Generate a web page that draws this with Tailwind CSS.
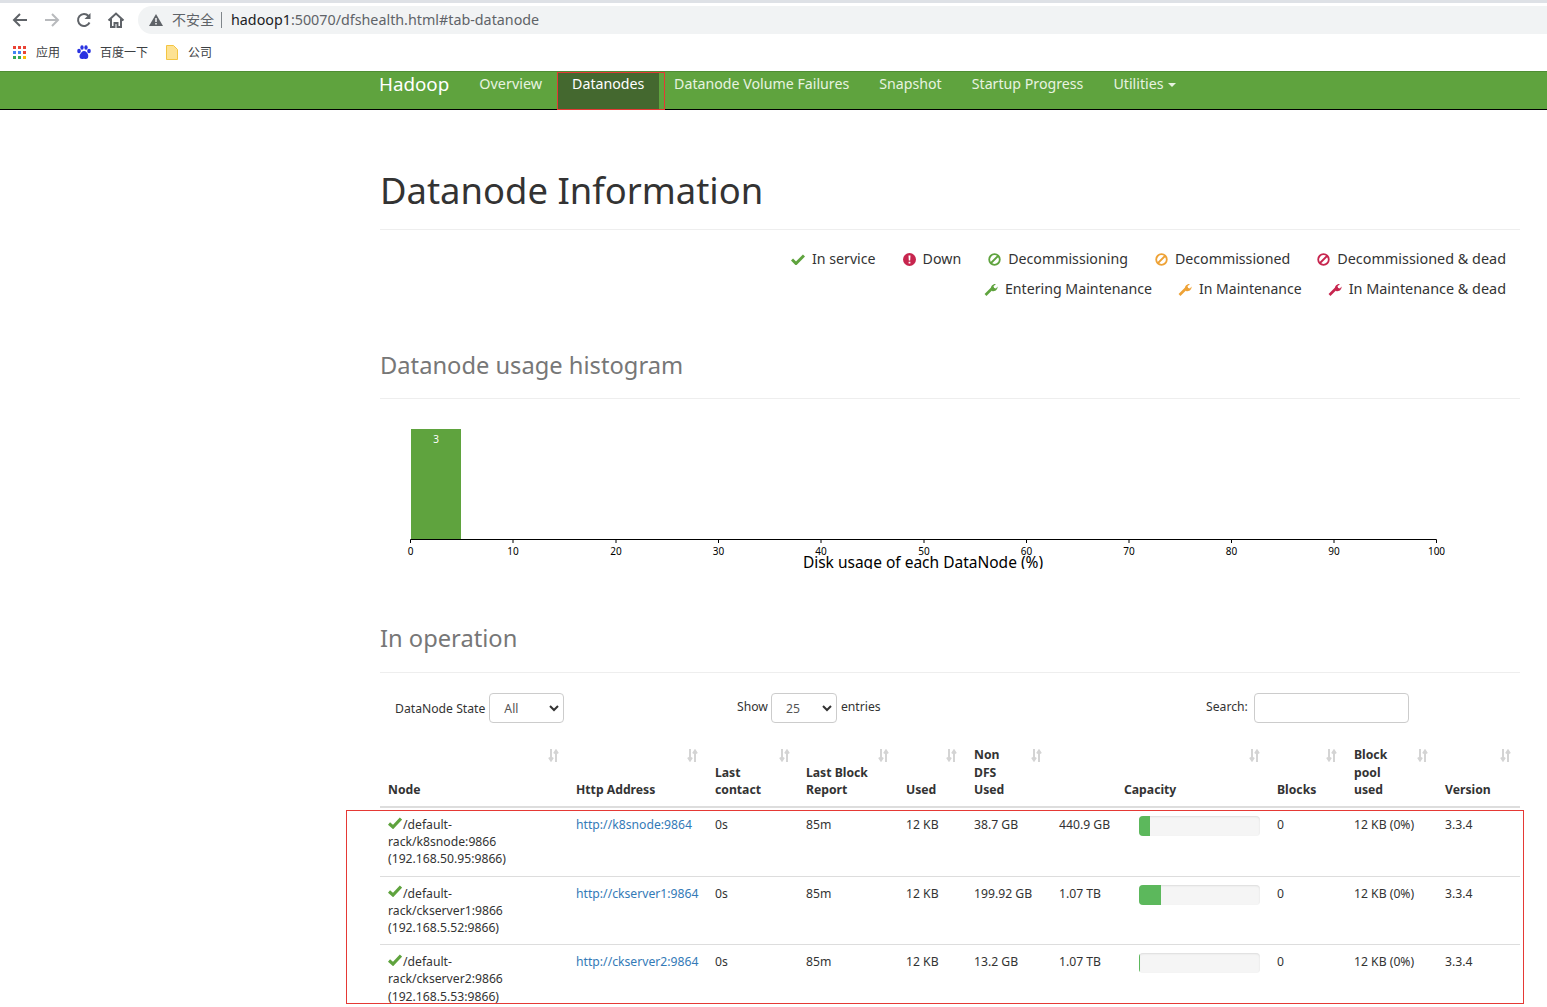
<!DOCTYPE html>
<html lang="en">
<head>
<meta charset="UTF-8" />
<title>Namenode information</title>
<script src="https://cdn.jsdelivr.net/npm/@tailwindcss/browser@4"></script>
</head>
<body class="bg-white text-[#333] font-['Noto_Sans','Noto_Sans_CJK_SC',sans-serif] text-[12.2px] leading-[17px] h-[1007px] overflow-hidden">

<!-- Browser chrome -->
<div class="h-[71px] bg-white border-t-[3px] border-[#dee1e6]">
  <div class="h-[32px] flex items-center pt-[1px]">
    <svg class="ml-[11px]" width="18" height="18" viewBox="0 0 18 18" fill="none" stroke="#5f6368" stroke-width="2"><path d="M16 9H3M9 3 3 9l6 6"/></svg>
    <svg class="ml-[14px]" width="18" height="18" viewBox="0 0 18 18" fill="none" stroke="#b8babd" stroke-width="2"><path d="M2 9h13M9 3l6 6-6 6"/></svg>
    <svg class="ml-[14px]" width="18" height="18" viewBox="0 0 18 18" fill="none" stroke="#5f6368" stroke-width="2"><path d="M14.500 11.500A6 6 0 1 1 13.500 5"/><path d="M15.500 2v6h-6" fill="#5f6368" stroke="none"/></svg>
    <svg class="ml-[14px]" width="18" height="18" viewBox="0 0 18 18" fill="none" stroke="#5f6368" stroke-width="2"><path d="M1.500 9.500 9 2.500l7.500 7M4 8v8h3.500v-4h3v4H14V8"/></svg>
    <div class="ml-[13px] flex-1 h-[28px] bg-[#f1f3f4] rounded-l-[14px] flex items-center pl-[11px] text-[14.3px]">
      <svg width="14" height="14" viewBox="0 0 14 14"><path d="M7 1 14 13H0Z" fill="#5f6368"/><path d="M6.300 5h1.400v4H6.300zM6.300 10h1.400v1.500H6.300z" fill="#fff"/></svg>
      <span class="ml-[9px] text-[#5f6368] text-[14px]">不安全</span>
      <span class="ml-[7px] w-px h-[16px] bg-[#80868b]"></span>
      <span class="ml-[9px] text-[#202124]">hadoop1<span class="text-[#5f6368]">:50070/dfshealth.html#tab-datanode</span></span>
    </div>
  </div>
  <div class="h-[35px] flex items-center text-[12px] text-[#3c4043]">
    <svg class="ml-[13px]" width="14" height="14" viewBox="0 0 14 14"><path fill="#ea4335" d="M0 0h3v3H0zM5 0h3v3H5zM10 0h3v3h-3z"/><path fill="#4285f4" d="M0 5h3v3H0zM5 5h3v3H5z"/><path fill="#ea4335" d="M10 5h3v3h-3z"/><path fill="#34a853" d="M0 10h3v3H0zM5 10h3v3H5z"/><path fill="#fbbc04" d="M10 10h3v3h-3z"/></svg>
    <span class="ml-[9px]">应用</span>
    <svg class="ml-[17px]" width="14" height="15" viewBox="0 0 14 15" fill="#2932e1"><ellipse cx="2" cy="6" rx="1.800" ry="2.300"/><ellipse cx="5" cy="2.500" rx="1.700" ry="2.300"/><ellipse cx="9" cy="2.500" rx="1.700" ry="2.300"/><ellipse cx="12" cy="6" rx="1.800" ry="2.300"/><path d="M7 6c-2 0-3 2-4 3.500S2.500 14 5 14c1 0 1.500-.3 2-.3s1 .3 2 .3c2.500 0 2.500-3 2-4.500S9 6 7 6Z"/></svg>
    <span class="ml-[9px]">百度一下</span>
    <svg class="ml-[18px]" width="12" height="15" viewBox="0 0 12 15"><path d="M.5.500h7l4 4v10H.500Z" fill="#fde293" stroke="#f4c542"/></svg>
    <span class="ml-[10px]">公司</span>
  </div>
</div>

<!-- Navbar -->
<nav class="h-[39px] bg-[#5fa33e] border-t border-[#4f8d33] border-b border-b-black flex text-[14.2px] leading-[20px] text-[#e8f3e0] pl-[364px]">
  <a class="px-[15px] text-[18.8px] leading-[24px] text-white">Hadoop</a>
  <a class="px-[15px] pt-[2px] text-[14.4px]">Overview</a>
  <a class="w-[108px] h-[38px] border border-[#e53935]">
    <span class="block w-[101px] h-full bg-[#44682f] text-white pl-[14px] pt-[1px]">Datanodes</span>
  </a>
  <a class="pl-[9px] pr-[15px] pt-[2px]">Datanode Volume Failures</a>
  <a class="px-[15px] pt-[2px]">Snapshot</a>
  <a class="px-[15px] pt-[2px]">Startup Progress</a>
  <a class="px-[15px] pt-[2px] flex items-start gap-[5px]">Utilities <span class="mt-[9px] border-x-[4px] border-x-transparent border-t-[4px] border-t-[#e8f3e0]"></span></a>
</nav>

<main class="ml-[380px] w-[1140px]">
  <div class="mt-[56px] h-[64px] border-b border-[#eee]">
    <h1 class="text-[36.4px] leading-[48px] text-[#333]">Datanode Information</h1>
  </div>

  <!-- Legend -->
  <div class="mt-[14px] pr-[14px] text-[14.2px] leading-[30px] flex flex-col items-end">
    <div class="flex">
      <span class="flex items-center"><svg class="mr-[7px]" width="14" height="12" viewBox="0 0 14 12"><path d="M1 6.500 5 10.500 13 2.500" fill="none" stroke="#5fa33e" stroke-width="3"/></svg>In service</span>
      <span class="flex items-center ml-[27px]"><svg class="mr-[7px]" width="13" height="13" viewBox="0 0 13 13"><circle cx="6.500" cy="6.500" r="6.500" fill="#c7254e"/><path d="M5.500 2.500h2l-.300 5H5.800zM5.600 8.800h1.800v1.800H5.600z" fill="#fff"/></svg>Down</span>
      <span class="flex items-center ml-[27px]"><svg class="mr-[7px]" width="13" height="13" viewBox="0 0 13 13" fill="none" stroke="#5fa33e" stroke-width="1.800"><circle cx="6.500" cy="6.500" r="5.300"/><path d="M3 10 10 3"/></svg>Decommissioning</span>
      <span class="flex items-center ml-[27px]"><svg class="mr-[7px]" width="13" height="13" viewBox="0 0 13 13" fill="none" stroke="#eea236" stroke-width="1.800"><circle cx="6.500" cy="6.500" r="5.300"/><path d="M3 10 10 3"/></svg>Decommissioned</span>
      <span class="flex items-center ml-[27px] text-[14.4px]"><svg class="mr-[7px]" width="13" height="13" viewBox="0 0 13 13" fill="none" stroke="#c7254e" stroke-width="1.800"><circle cx="6.500" cy="6.500" r="5.300"/><path d="M3 10 10 3"/></svg>Decommissioned &amp; dead</span>
    </div>
    <div class="flex">
      <span class="flex items-center"><svg class="mr-[7px]" width="14" height="15" viewBox="0 0 14 14" fill="none" stroke="#5fa33e"><path d="M1.500 12.500 8 6" stroke-width="2.600"/><path d="M7 6.500C6.500 3.500 9 1 12 1.500L9.500 3.800l.7 1.800 1.800.4L13.500 4c.5 3-2.500 5.500-5.500 4.500" fill="#5fa33e" stroke="none"/></svg>Entering Maintenance</span>
      <span class="flex items-center ml-[26px] text-[14px]"><svg class="mr-[7px]" width="14" height="15" viewBox="0 0 14 14" fill="none" stroke="#eea236"><path d="M1.500 12.500 8 6" stroke-width="2.600"/><path d="M7 6.500C6.500 3.500 9 1 12 1.500L9.500 3.800l.7 1.800 1.800.4L13.500 4c.5 3-2.500 5.500-5.500 4.500" fill="#eea236" stroke="none"/></svg>In Maintenance</span>
      <span class="flex items-center ml-[26px] text-[14.4px]"><svg class="mr-[7px]" width="14" height="15" viewBox="0 0 14 14" fill="none" stroke="#c7254e"><path d="M1.500 12.500 8 6" stroke-width="2.600"/><path d="M7 6.500C6.500 3.500 9 1 12 1.500L9.500 3.800l.7 1.800 1.800.4L13.500 4c.5 3-2.500 5.500-5.500 4.500" fill="#c7254e" stroke="none"/></svg>In Maintenance &amp; dead</span>
    </div>
  </div>

  <!-- Histogram -->
  <div class="mt-[45px] h-[50px] border-b border-[#eee]">
    <h2 class="text-[23.7px] leading-[32px] text-[#777]">Datanode usage histogram</h2>
  </div>
  <svg class="block mt-[20px]" width="1140" height="150" viewBox="0 0 1140 150" font-family="Noto Sans, sans-serif" font-size="10">
    <rect x="31" y="10" width="50" height="110" fill="#5fa33e"/>
    <text x="56" y="24" text-anchor="middle" fill="#fff">3</text>
    <path d="M30.500 124V120.500H1056.500V124" fill="none" stroke="#000"/>
    <path d="M133 120v4M236 120v4M338.500 120v4M441 120v4M544 120v4M646.500 120v4M749 120v4M851.500 120v4M954 120v4" stroke="#000"/>
    <g text-anchor="middle" fill="#000">
      <text x="30.500" y="136">0</text><text x="133" y="136">10</text><text x="236" y="136">20</text><text x="338.500" y="136">30</text><text x="441" y="136">40</text><text x="544" y="136">50</text><text x="646.500" y="136">60</text><text x="749" y="136">70</text><text x="851.500" y="136">80</text><text x="954" y="136">90</text><text x="1056.500" y="136">100</text>
    </g>
    <text x="543" y="149" text-anchor="middle" font-size="15.500" fill="#000">Disk usage of each DataNode (%)</text>
  </svg>

  <!-- In operation -->
  <div class="mt-[53px] h-[51px] border-b border-[#eee]">
    <h2 class="text-[23.7px] leading-[32px] text-[#777]">In operation</h2>
  </div>

  <div class="relative h-[50px] mt-[20px] flex">
    <div class="w-[357px] pl-[15px] flex items-start">
      <span class="mt-[7px]">DataNode State</span>
      <div class="ml-[4px] w-[75px] h-[30px] border border-[#ccc] rounded-[4px] flex items-center justify-between pl-[14px] pr-[4px] text-[#555]">All
        <svg width="10" height="7" viewBox="0 0 10 7" fill="none" stroke="#333" stroke-width="2"><path d="M1 1l4 4 4-4"/></svg></div>
    </div>
    <div class="w-[469px] flex items-start">
      <span class="mt-[5px]">Show</span>
      <div class="ml-[3px] w-[66px] h-[30px] border border-[#ccc] rounded-[4px] flex items-center justify-between pl-[14px] pr-[4px] text-[#555]">25
        <svg width="10" height="7" viewBox="0 0 10 7" fill="none" stroke="#333" stroke-width="2"><path d="M1 1l4 4 4-4"/></svg></div>
      <span class="mt-[5px] ml-[4px]">entries</span>
    </div>
    <div class="flex items-start">
      <span class="mt-[5px]">Search:</span>
      <div class="ml-[6px] w-[155px] h-[30px] border border-[#ccc] rounded-[4px]"></div>
    </div>
  </div>

  <!-- Table -->
  <table class="table-fixed border-collapse w-[1140px] leading-[17.2px]">
    <colgroup>
      <col class="w-[188px]" /><col class="w-[139px]" /><col class="w-[91px]" /><col class="w-[100px]" /><col class="w-[68px]" /><col class="w-[85px]" /><col class="w-[65px]" /><col class="w-[153px]" /><col class="w-[77px]" /><col class="w-[91px]" /><col class="w-[83px]" />
    </colgroup>
    <thead>
      <tr class="border-b-2 border-[#ddd] font-bold text-left align-bottom">
        <th class="relative h-[64px] px-[8px] pb-[8px]">Node<svg class="absolute right-[9px] top-[6px]" width="11" height="13" viewBox="0 0 11 13" fill="none" stroke="#d4d4d4" stroke-width="2"><path d="M3 0v11M1 8.500 3 11.500 5 8.500M8 13V2M6 4.500 8 1.500l2 3"/></svg></th>
        <th class="relative px-[8px] pb-[8px]">Http Address<svg class="absolute right-[9px] top-[6px]" width="11" height="13" viewBox="0 0 11 13" fill="none" stroke="#d4d4d4" stroke-width="2"><path d="M3 0v11M1 8.500 3 11.500 5 8.500M8 13V2M6 4.500 8 1.500l2 3"/></svg></th>
        <th class="relative px-[8px] pb-[8px]">Last<br />contact<svg class="absolute right-[8px] top-[6px]" width="11" height="13" viewBox="0 0 11 13" fill="none" stroke="#d4d4d4" stroke-width="2"><path d="M3 0v11M1 8.500 3 11.500 5 8.500M8 13V2M6 4.500 8 1.500l2 3"/></svg></th>
        <th class="relative px-[8px] pb-[8px]">Last Block<br />Report<svg class="absolute right-[9px] top-[6px]" width="11" height="13" viewBox="0 0 11 13" fill="none" stroke="#d4d4d4" stroke-width="2"><path d="M3 0v11M1 8.500 3 11.500 5 8.500M8 13V2M6 4.500 8 1.500l2 3"/></svg></th>
        <th class="relative px-[8px] pb-[8px]">Used<svg class="absolute right-[9px] top-[6px]" width="11" height="13" viewBox="0 0 11 13" fill="none" stroke="#d4d4d4" stroke-width="2"><path d="M3 0v11M1 8.500 3 11.500 5 8.500M8 13V2M6 4.500 8 1.500l2 3"/></svg></th>
        <th class="relative px-[8px] pb-[8px]">Non<br />DFS<br />Used<svg class="absolute right-[9px] top-[6px]" width="11" height="13" viewBox="0 0 11 13" fill="none" stroke="#d4d4d4" stroke-width="2"><path d="M3 0v11M1 8.500 3 11.500 5 8.500M8 13V2M6 4.500 8 1.500l2 3"/></svg></th>
        <th></th>
        <th class="relative px-[8px] pb-[8px]">Capacity<svg class="absolute right-[9px] top-[6px]" width="11" height="13" viewBox="0 0 11 13" fill="none" stroke="#d4d4d4" stroke-width="2"><path d="M3 0v11M1 8.500 3 11.500 5 8.500M8 13V2M6 4.500 8 1.500l2 3"/></svg></th>
        <th class="relative px-[8px] pb-[8px]">Blocks<svg class="absolute right-[9px] top-[6px]" width="11" height="13" viewBox="0 0 11 13" fill="none" stroke="#d4d4d4" stroke-width="2"><path d="M3 0v11M1 8.500 3 11.500 5 8.500M8 13V2M6 4.500 8 1.500l2 3"/></svg></th>
        <th class="relative px-[8px] pb-[8px]">Block<br />pool<br />used<svg class="absolute right-[9px] top-[6px]" width="11" height="13" viewBox="0 0 11 13" fill="none" stroke="#d4d4d4" stroke-width="2"><path d="M3 0v11M1 8.500 3 11.500 5 8.500M8 13V2M6 4.500 8 1.500l2 3"/></svg></th>
        <th class="relative px-[8px] pb-[8px]">Version<svg class="absolute right-[9px] top-[6px]" width="11" height="13" viewBox="0 0 11 13" fill="none" stroke="#d4d4d4" stroke-width="2"><path d="M3 0v11M1 8.500 3 11.500 5 8.500M8 13V2M6 4.500 8 1.500l2 3"/></svg></th>
      </tr>
    </thead>
    <tbody class="align-top">
      <tr class="border-b border-[#ddd]">
        <td class="px-[8px] pt-[8px] pb-[8px]"><svg class="inline-block mr-[1px] relative top-[-3px]" width="14" height="12" viewBox="0 0 14 12"><path d="M1 6.500 5 10 13 1.500" fill="none" stroke="#5fa33e" stroke-width="3.200"/></svg>/default-<br />rack/k8snode:9866<br />(192.168.50.95:9866)</td>
        <td class="px-[8px] pt-[8px]"><a class="text-[#337ab7]">http://k8snode:9864</a></td>
        <td class="px-[8px] pt-[8px]">0s</td><td class="px-[8px] pt-[8px]">85m</td><td class="px-[8px] pt-[8px]">12 KB</td><td class="px-[8px] pt-[8px]">38.7 GB</td>
        <td class="pl-[8px] pt-[8px]">440.9 GB</td>
        <td class="pt-[8px] pl-[23px]"><div class="w-[121px] h-[20px] rounded-[4px] bg-[#f5f5f5] overflow-hidden shadow-[inset_0_1px_2px_rgba(0,0,0,0.1)]"><div class="h-full bg-[#5cb85c] w-[9%]"></div></div></td>
        <td class="px-[8px] pt-[8px]">0</td><td class="px-[8px] pt-[8px]">12 KB (0%)</td><td class="px-[8px] pt-[8px]">3.3.4</td>
      </tr>
      <tr class="border-b border-[#ddd]">
        <td class="px-[8px] pt-[8px] pb-[8px]"><svg class="inline-block mr-[1px] relative top-[-3px]" width="14" height="12" viewBox="0 0 14 12"><path d="M1 6.500 5 10 13 1.500" fill="none" stroke="#5fa33e" stroke-width="3.200"/></svg>/default-<br />rack/ckserver1:9866<br />(192.168.5.52:9866)</td>
        <td class="px-[8px] pt-[8px]"><a class="text-[#337ab7]">http://ckserver1:9864</a></td>
        <td class="px-[8px] pt-[8px]">0s</td><td class="px-[8px] pt-[8px]">85m</td><td class="px-[8px] pt-[8px]">12 KB</td><td class="px-[8px] pt-[8px]">199.92 GB</td>
        <td class="pl-[8px] pt-[8px]">1.07 TB</td>
        <td class="pt-[8px] pl-[23px]"><div class="w-[121px] h-[20px] rounded-[4px] bg-[#f5f5f5] overflow-hidden shadow-[inset_0_1px_2px_rgba(0,0,0,0.1)]"><div class="h-full bg-[#5cb85c] w-[18%]"></div></div></td>
        <td class="px-[8px] pt-[8px]">0</td><td class="px-[8px] pt-[8px]">12 KB (0%)</td><td class="px-[8px] pt-[8px]">3.3.4</td>
      </tr>
      <tr>
        <td class="px-[8px] pt-[8px] pb-[8px]"><svg class="inline-block mr-[1px] relative top-[-3px]" width="14" height="12" viewBox="0 0 14 12"><path d="M1 6.500 5 10 13 1.500" fill="none" stroke="#5fa33e" stroke-width="3.200"/></svg>/default-<br />rack/ckserver2:9866<br />(192.168.5.53:9866)</td>
        <td class="px-[8px] pt-[8px]"><a class="text-[#337ab7]">http://ckserver2:9864</a></td>
        <td class="px-[8px] pt-[8px]">0s</td><td class="px-[8px] pt-[8px]">85m</td><td class="px-[8px] pt-[8px]">12 KB</td><td class="px-[8px] pt-[8px]">13.2 GB</td>
        <td class="pl-[8px] pt-[8px]">1.07 TB</td>
        <td class="pt-[8px] pl-[23px]"><div class="w-[121px] h-[20px] rounded-[4px] bg-[#f5f5f5] overflow-hidden shadow-[inset_0_1px_2px_rgba(0,0,0,0.1)]"><div class="h-full bg-[#5cb85c] w-[1%]"></div></div></td>
        <td class="px-[8px] pt-[8px]">0</td><td class="px-[8px] pt-[8px]">12 KB (0%)</td><td class="px-[8px] pt-[8px]">3.3.4</td>
      </tr>
    </tbody>
  </table>
</main>

<!-- Red annotation box drawn over the page -->
<div class="absolute left-[346px] top-[810px] w-[1178px] h-[194px] border border-[#e53935]"></div>
</body>
</html>
